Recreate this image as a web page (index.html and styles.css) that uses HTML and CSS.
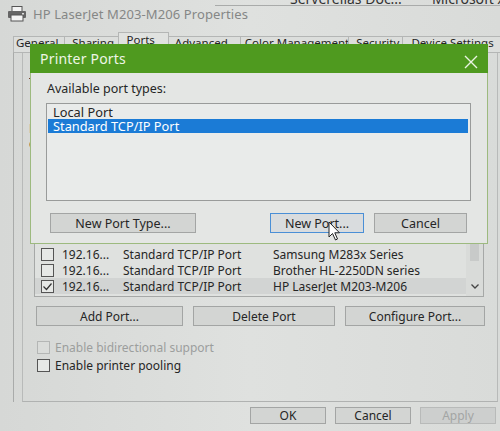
FILE: index.html
```html
<!DOCTYPE html>
<html>
<head>
<meta charset="utf-8">
<link rel="stylesheet" href="styles.css">
</head>
<body>
<div class="screen">
  <div class="topstrip">
    <span class="cut cut1">Serverelias Doc...</span>
    <span class="cut cut2">Microsoft XPS Document</span>
  </div>
  <div class="wtitle">
    <svg class="picon" width="20" height="16" viewBox="0 0 20 16">
      <rect x="5" y="0.5" width="10" height="5" fill="#f4f4f4" stroke="#555"/>
      <rect x="1" y="5" width="18" height="7" rx="1" fill="#666"/>
      <rect x="4" y="9" width="12" height="6" fill="#f4f4f4" stroke="#555"/>
      <rect x="15" y="7" width="2" height="1.5" fill="#ddd"/>
    </svg>
    <span class="wtitle-text">HP LaserJet M203-M206 Properties</span>
  </div>
  <div class="window">
    <div class="tabs">
      <div class="tab t-general">General</div>
      <div class="tab t-sharing">Sharing</div>
      <div class="tab t-ports active">Ports</div>
      <div class="tab t-adv">Advanced</div>
      <div class="tab t-color">Color Management</div>
      <div class="tab t-sec">Security</div>
      <div class="tab t-dev">Device Settings</div>
    </div>
    <div class="page">
      <div class="frag frag1">To</div>
      <div class="frag frag2">Print</div>
      <div class="frag frag3">checked</div>
      <div class="portlist">
        <div class="plist-rows">
          <div class="prow"><span class="cb"></span><span class="c1">192.16...</span><span class="c2">Standard TCP/IP Port</span><span class="c3">Samsung M283x Series</span></div>
          <div class="prow"><span class="cb"></span><span class="c1">192.16...</span><span class="c2">Standard TCP/IP Port</span><span class="c3">Brother HL-2250DN series</span></div>
          <div class="prow sel"><span class="cb checked"><svg width="11" height="11" viewBox="0 0 11 11"><path d="M1.5 5.5 L4.5 8.5 L9.5 2.5" fill="none" stroke="#333" stroke-width="1.2"/></svg></span><span class="c1">192.16...</span><span class="c2">Standard TCP/IP Port</span><span class="c3">HP LaserJet M203-M206</span></div>
        </div>
        <div class="scrollbar">
          <div class="thumb"></div>
          <svg class="chev" width="10" height="7" viewBox="0 0 10 7"><path d="M1.5 1.5 L5 5 L8.5 1.5" fill="none" stroke="#444" stroke-width="1.3"/></svg>
        </div>
      </div>
      <div class="pbtns">
        <div class="btn b-add">Add Port...</div>
        <div class="btn b-del">Delete Port</div>
        <div class="btn b-cfg">Configure Port...</div>
      </div>
      <div class="chk chk1 disabled"><span class="cb"></span>Enable bidirectional support</div>
      <div class="chk"><span class="cb"></span>Enable printer pooling</div>
    </div>
    <div class="footer">
      <div class="btn fbtn">OK</div>
      <div class="btn fbtn">Cancel</div>
      <div class="btn fbtn disabled">Apply</div>
    </div>
  </div>

  <div class="dialog">
    <div class="dtitle">
      <span>Printer Ports</span>
      <svg class="dclose" width="14" height="14" viewBox="0 0 14 14"><path d="M1 1 L13 13 M13 1 L1 13" stroke="#eaf3e2" stroke-width="1.4"/></svg>
    </div>
    <div class="dbody">
      <div class="dlabel">Available port types:</div>
      <div class="dlist">
        <div class="ditem">Local Port</div>
        <div class="ditem selected">Standard TCP/IP Port</div>
      </div>
      <div class="dbtns">
        <div class="btn d-newtype">New Port Type...</div>
        <div class="btn d-newport focus">New Port...</div>
        <div class="btn d-cancel">Cancel</div>
      </div>
    </div>
  </div>

  <svg class="cursor" width="14" height="21" viewBox="0 0 14 21">
    <path d="M1 1 L1 16 L4.5 12.5 L7.5 19 L9.5 18 L6.8 11.8 L11.5 11.8 Z" fill="#fff" stroke="#222" stroke-width="1" stroke-linejoin="round"/>
  </svg>
</div>
</body>
</html>
```

FILE: styles.css
```css
* { box-sizing: border-box; }
html, body { margin: 0; padding: 0; }
body {
  width: 500px;
  height: 431px;
  overflow: hidden;
  background: #d8dad8;
  font-family: "Noto Sans", "Open Sans", sans-serif;
  font-size: 12px;
  color: #262626;
}
.screen {
  position: relative;
  width: 500px;
  height: 431px;
  overflow: hidden;
  background: linear-gradient(90deg, #d6d8d6 0%, #dfe1df 50%, #d9dbd9 100%);
}

/* top strip with cut off text */
.topstrip {
  height: 6px;
  overflow: hidden;
  position: relative;
  display: flex;
}
.topstrip::after {
  content: "";
  position: absolute;
  left: 215px;
  right: 0;
  bottom: 0;
  height: 1px;
  background: #a9abaa;
}
.cut {
  margin-top: -11px;
  font-size: 14px;
  color: #333;
  white-space: nowrap;
}
.cut1 { margin-left: 290px; }
.cut2 { margin-left: 30px; }

/* window title */
.wtitle {
  height: 22px;
  display: flex;
  align-items: center;
  padding-left: 7px;
  padding-bottom: 6px;
  gap: 6px;
}
.picon { flex: none; }
.wtitle-text {
  font-size: 13px;
  color: #858786;
  letter-spacing: 0.1px;
}

/* window */
.window {
  margin-left: 13px;
  height: 403px;
  display: flex;
  flex-direction: column;
}
.tabs {
  display: flex;
  height: 24px;
  align-items: flex-end;
}
.tab {
  height: 16px;
  border: 1px solid #b4b6b5;
  border-bottom: none;
  margin-right: -1px;
  display: flex;
  align-items: flex-start;
  padding-top: 0;
  padding-left: 2px;
  font-size: 11.5px;
  line-height: 1;
  background: #dcdedc;
  white-space: nowrap;
  overflow: hidden;
}
.tab.active {
  height: 20px;
  background: #e0e2e0;
  padding-top: 1px;
  position: relative;
  z-index: 1;
}
.t-general { width: 53px; }
.t-sharing { width: 55px; padding-left: 7px; }
.t-ports { width: 52px; padding-left: 8px; }
.t-adv { width: 74px; padding-left: 6px; }
.t-color { width: 111px; padding-left: 4px; }
.t-sec { width: 56px; padding-left: 7px; }
.t-dev { width: 100px; padding-left: 8px; }

.page {
  border-left: 1px solid #a9abaa;
  border-top: 1px solid #b4b6b5;
  flex: 1;
  position: relative;
  display: flex;
  flex-direction: column;
  padding-left: 9px;
}
.page::before {
  content: "";
  position: absolute;
  left: 8px;
  top: 0;
  right: 2px;
  bottom: 0;
  border-left: 1px solid #b8bab9;
  border-right: 1px solid #b8bab9;
  border-bottom: 1px solid #b0b2b1;
}
.frag {
  margin-left: 6px;
  width: 10px;
  overflow: hidden;
  white-space: nowrap;
  line-height: 15px;
  height: 15px;
}
.frag1 { margin-top: 22px; }
.frag2 { margin-top: 31px; }
.frag3 { margin-top: 0; }

.portlist {
  margin-top: 9px;
  margin-left: 11px;
  width: 450px;
  height: 137px;
  border: 1px solid #a6a8a7;
  display: flex;
  background: #dfe1df;
  position: relative;
  z-index: 1;
}
.plist-rows {
  flex: 1;
  display: flex;
  flex-direction: column;
  justify-content: flex-end;
  padding-bottom: 2px;
}
.prow {
  height: 16px;
  display: flex;
  align-items: center;
  white-space: nowrap;
}
.prow.sel { background: #d2d4d3; }
.prow .cb { margin-left: 6px; margin-right: 8px; }
.c1 { width: 61px; }
.c2 { width: 150px; }
.cb {
  width: 13px;
  height: 13px;
  border: 1px solid #555;
  background: #e6e8e6;
  display: inline-flex;
  align-items: center;
  justify-content: center;
  flex: none;
}
.scrollbar {
  width: 17px;
  background: #d9dbd9;
  position: relative;
}
.thumb {
  position: absolute;
  left: 4px;
  right: 4px;
  top: 60px;
  height: 40px;
  background: #c8cac9;
}
.chev {
  position: absolute;
  left: 4px;
  bottom: 6px;
}

.pbtns {
  display: flex;
  gap: 10px;
  margin-top: 9px;
  margin-left: 13px;
  position: relative;
  z-index: 1;
}
.btn {
  height: 20px;
  border: 1px solid #a3a5a4;
  background: #d3d5d3;
  display: flex;
  align-items: center;
  justify-content: center;
  font-size: 12px;
  white-space: nowrap;
}
.b-add { width: 147px; }
.b-del { width: 142px; }
.b-cfg { width: 140px; }

.chk {
  display: flex;
  align-items: center;
  gap: 5px;
  margin-left: 14px;
  height: 18px;
  position: relative;
  z-index: 1;
}
.chk1 { margin-top: 12px; }
.chk.disabled { color: #9c9e9d; }
.chk.disabled .cb { border-color: #b4b6b5; background: #dadcda; }

.footer {
  height: 29px;
  display: flex;
  justify-content: flex-end;
  align-items: center;
  gap: 9px;
  padding-right: 4px;
  padding-top: 1px;
  padding-bottom: 3px;
}
.fbtn { width: 76px; height: 17px; }
.fbtn.disabled { color: #a3a5a4; background: #cdcfce; border-color: #b8bab9; }

/* dialog overlay */
.dialog {
  position: absolute;
  left: 30px;
  top: 44px;
  width: 458px;
  height: 200px;
  display: flex;
  flex-direction: column;
  z-index: 5;
}
.dtitle {
  height: 29px;
  background: #4f9a1f;
  color: #eef6e6;
  font-size: 14px;
  display: flex;
  align-items: center;
  justify-content: space-between;
  padding: 0 10px 0 10px;
  letter-spacing: 0.2px;
}
.dclose { margin-top: 6px; }
.dbody {
  flex: 1;
  background: #e4e6e4;
  border: 1px solid #9dba7f;
  border-top: none;
  padding: 7px 16px 0 15px;
  display: flex;
  flex-direction: column;
}
.dlabel {
  font-size: 12.5px;
  line-height: 18px;
  margin-left: 1px;
}
.dlist {
  margin-top: 5px;
  height: 98px;
  width: 425px;
  border: 1px solid #999b9a;
  background: #e9ebea;
  padding: 1px 2px 0 1px;
}
.ditem {
  height: 14px;
  line-height: 14px;
  font-size: 12.8px;
  padding-left: 5px;
}
.ditem.selected {
  background: #1b7bd6;
  color: #fff;
}
.dbtns {
  display: flex;
  margin-top: 12px;
}
.dbtns .btn { height: 20px; font-size: 12.5px; }
.d-newtype { width: 146px; margin-left: 4px; }
.d-newport { width: 94px; margin-left: 74px; }
.d-cancel { width: 93px; margin-left: 10px; }
.btn.focus { border: 1px solid #4a8fd6; background: #d9dcde; }

.cursor {
  position: absolute;
  left: 328px;
  top: 221px;
  z-index: 10;
}
```
